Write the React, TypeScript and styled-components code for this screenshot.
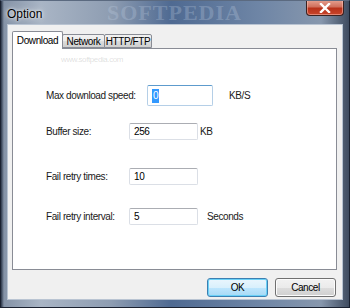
import styled, { createGlobalStyle } from 'styled-components';

const GlobalStyle = createGlobalStyle`
  html, body {
    margin: 0;
    padding: 0;
    background: #ffffff;
  }
  body {
    font-family: 'Liberation Sans', Arial, sans-serif;
  }
`;

type FieldProps = {
  label: string;
  labelWidth: number;
  value: string;
  inputWidth: number;
  inputHeight: number;
  unit?: string;
  unitGap?: number;
  top: number;
  focused?: boolean;
};

const fields: FieldProps[] = [
  { label: 'Max download speed:', labelWidth: 101, value: '0', inputWidth: 66, inputHeight: 21, unit: 'KB/S', unitGap: 16, top: 36, focused: true },
  { label: 'Buffer size:', labelWidth: 83, value: '256', inputWidth: 69, inputHeight: 17, unit: 'KB', unitGap: 2, top: 17 },
  { label: 'Fail retry times:', labelWidth: 83, value: '10', inputWidth: 69, inputHeight: 17, top: 28 },
  { label: 'Fail retry interval:', labelWidth: 83, value: '5', inputWidth: 69, inputHeight: 17, unit: 'Seconds', unitGap: 9, top: 23 },
];

function Field(props: FieldProps) {
  return (
    <Row $top={props.top}>
      <Label $width={props.labelWidth}>{props.label}</Label>
      <TextBox $width={props.inputWidth} $height={props.inputHeight} $focused={props.focused}>
        {props.focused ? <Selected>{props.value}</Selected> : props.value}
      </TextBox>
      {props.unit && <Unit $gap={props.unitGap ?? 0}>{props.unit}</Unit>}
    </Row>
  );
}

export default function App() {
  return (
    <>
      <GlobalStyle />
      <Window>
        <TitleBar>
          <Title>Option</Title>
          <TitleMark>SOFTPEDIA</TitleMark>
          <CloseButton>
            <svg width="12" height="10" viewBox="0 0 12 10">
              <path d="M2 1 L10 9 M10 1 L2 9" stroke="#ffffff" strokeWidth="2.4" strokeLinecap="square" />
            </svg>
          </CloseButton>
        </TitleBar>

        <Client>
          <TabStrip>
            <Tab $active>Download</Tab>
            <Tab $width={43}>Network</Tab>
            <Tab $width={48}>HTTP/FTP</Tab>
          </TabStrip>

          <Panel>
            <UrlMark>www.softpedia.com</UrlMark>
            {fields.map((f) => (
              <Field key={f.label} {...f} />
            ))}
          </Panel>

          <ButtonRow>
            <Button $default>OK</Button>
            <Button>Cancel</Button>
          </ButtonRow>
        </Client>
      </Window>
    </>
  );
}

const Window = styled.div`
  position: relative;
  width: 350px;
  height: 308px;
  box-sizing: border-box;
  display: flex;
  flex-direction: column;
  overflow: hidden;
  border: 1px solid #1a2130;
  border-top-color: #5b6a80;
  background: linear-gradient(
      90deg,
      #2b3648 0px,
      #8593a7 3px,
      #a9b5c5 40px,
      #8e9db2 110px,
      #4f6a92 170px,
      #6f86a6 260px,
      #8797ad 320px,
      #3f4c60 348px
    );
`;

const TitleBar = styled.div`
  position: relative;
  height: 23px;
  display: flex;
  align-items: flex-start;
  padding-left: 6px;
`;

const Title = styled.span`
  margin-top: 6px;
  font-size: 12px;
  color: #000000;
  text-shadow: 0 0 6px rgba(255, 255, 255, 0.9), 0 0 3px rgba(255, 255, 255, 0.9);
`;

const TitleMark = styled.span`
  position: absolute;
  left: 106px;
  top: 1px;
  font-family: 'Liberation Serif', 'Times New Roman', serif;
  font-weight: bold;
  font-size: 22px;
  letter-spacing: 1px;
  line-height: 22px;
  color: rgba(190, 205, 225, 0.3);
`;

const CloseButton = styled.div`
  margin-left: auto;
  margin-right: 5px;
  margin-top: -1px;
  width: 38px;
  height: 16px;
  box-sizing: border-box;
  display: flex;
  align-items: center;
  justify-content: center;
  border: 1px solid #3b2220;
  border-top: none;
  border-radius: 0 0 4px 4px;
  background: linear-gradient(180deg, #e6a393 0%, #d0705d 45%, #b8321b 55%, #c8452a 100%);
  box-shadow: inset 0 0 0 1px rgba(255, 200, 190, 0.5);
`;

const Client = styled.div`
  flex: 1;
  margin: 0 6px 7px 6px;
  box-sizing: border-box;
  display: flex;
  flex-direction: column;
  padding: 6px 5px 0 4px;
  background: #f0f0f0;
  border: 1px solid #b9c4d2;
  font-size: 10px;
  letter-spacing: -0.4px;
  color: #000000;
`;

const TabStrip = styled.div`
  display: flex;
  align-items: flex-end;
  height: 17px;
  position: relative;
  z-index: 1;
`;

const Tab = styled.div<{ $active?: boolean; $width?: number }>`
  box-sizing: border-box;
  width: ${({ $active, $width }) => ($active ? 51 : $width ?? 44)}px;
  height: ${({ $active }) => ($active ? 18 : 14)}px;
  margin-bottom: ${({ $active }) => ($active ? -1 : 0)}px;
  margin-left: ${({ $active }) => ($active ? 0 : -1)}px;
  padding-top: ${({ $active }) => ($active ? 3 : 1)}px;
  text-align: center;
  white-space: nowrap;
  border: 1px solid #898c95;
  border-bottom: ${({ $active }) => ($active ? 'none' : '1px solid #898c95')};
  border-radius: 2px 2px 0 0;
  background: ${({ $active }) =>
    $active ? '#ffffff' : 'linear-gradient(180deg, #f2f2f2 0%, #ebebeb 50%, #dddddd 51%, #cfcfcf 100%)'};
  z-index: ${({ $active }) => ($active ? 2 : 1)};
  &:first-child {
    margin-left: 0;
  }
`;

const Panel = styled.div`
  position: relative;
  width: 325px;
  height: 222px;
  box-sizing: border-box;
  border: 1px solid #898c95;
  background: #ffffff;
  padding-left: 33px;
`;

const UrlMark = styled.span`
  position: absolute;
  left: 48px;
  top: 6px;
  font-size: 8px;
  color: rgba(150, 150, 150, 0.3);
`;

const Row = styled.div<{ $top: number }>`
  display: flex;
  align-items: center;
  margin-top: ${({ $top }) => $top}px;
`;

const Label = styled.span<{ $width: number }>`
  width: ${({ $width }) => $width}px;
  flex-shrink: 0;
  color: #1a1a1a;
`;

const TextBox = styled.div<{ $width: number; $height: number; $focused?: boolean }>`
  box-sizing: border-box;
  width: ${({ $width }) => $width}px;
  height: ${({ $height }) => $height}px;
  display: flex;
  align-items: center;
  padding-left: 4px;
  border: 1px solid ${({ $focused }) => ($focused ? '#b5cfe7' : '#dbdfe6')};
  border-top-color: ${({ $focused }) => ($focused ? '#5d9bcd' : '#abadb3')};
  border-radius: 2px;
  background: #ffffff;
  color: #000000;
`;

const Selected = styled.span`
  background: #3399ff;
  color: #ffffff;
  padding: 0 1px;
  line-height: 14px;
`;

const Unit = styled.span<{ $gap: number }>`
  margin-left: ${({ $gap }) => $gap}px;
  color: #1a1a1a;
`;

const ButtonRow = styled.div`
  display: flex;
  justify-content: flex-end;
  gap: 7px;
  margin-top: 8px;
  padding-right: 1px;
`;

const Button = styled.div<{ $default?: boolean }>`
  box-sizing: border-box;
  width: 61px;
  height: 19px;
  display: flex;
  align-items: center;
  justify-content: center;
  border: 1px solid ${({ $default }) => ($default ? '#3c7fb1' : '#707070')};
  border-radius: 3px;
  background: ${({ $default }) =>
    $default
      ? 'linear-gradient(180deg, #eaf6fd 0%, #d9f0fc 50%, #bee6fd 51%, #a7d9f5 100%)'
      : 'linear-gradient(180deg, #f2f2f2 0%, #ebebeb 50%, #dddddd 51%, #cfcfcf 100%)'};
  box-shadow: ${({ $default }) => ($default ? 'inset 0 0 0 1px #6ad1f7' : 'inset 0 0 0 1px #fcfcfc')};
  color: #000000;
`;
